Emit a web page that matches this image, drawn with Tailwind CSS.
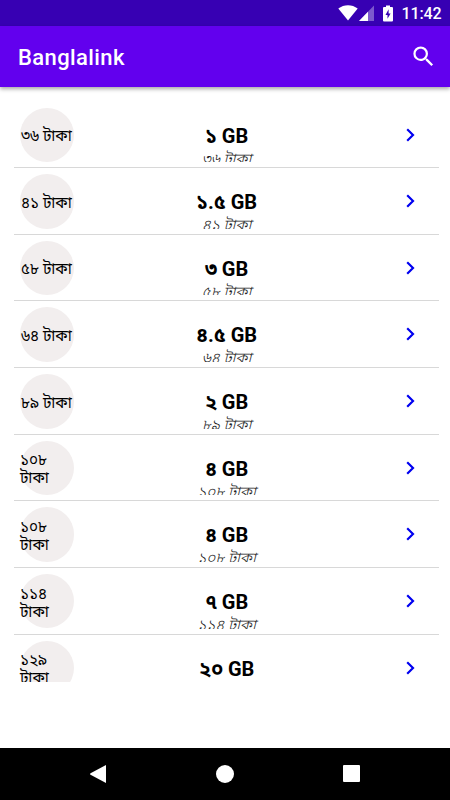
<!DOCTYPE html>
<html lang="bn">
<head>
    <meta charset="UTF-8">
    <meta name="viewport" content="width=device-width, initial-scale=1.0">
    <title>Banglalink</title>
    <script src="https://cdn.jsdelivr.net/npm/@tailwindcss/browser@4"></script>
</head>
<body class="bg-white">
    <div class="flex h-[800px] w-[450px] flex-col overflow-hidden font-[Roboto,'Noto_Sans_Bengali','Noto_Sans',sans-serif] text-black">
        <!-- Status bar -->
        <div class="flex h-[26px] shrink-0 items-center justify-end bg-[#3700b3] pr-[8.500px] text-white">
            <svg class="mr-px h-[16px] w-[20px]" viewBox="0 0 20 16" fill="currentColor"><path d="M.3 3.6C6-.9 14-.9 19.700 3.600L10 15.500Z"/></svg>
            <svg class="mr-[9px] h-[16px] w-[15px]" viewBox="0 0 15 16" fill="currentColor"><path d="M15 .5V16H0Z" opacity=".35"/><path d="M9 6.700V16H0Z"/></svg>
            <svg class="mr-[8px] h-[17px] w-[10px]" viewBox="0 0 10 17"><path fill="currentColor" d="M3 .5h4V2h2q1 0 1 1v12.500q0 1-1 1H1q-1 0-1-1V3q0-1 1-1h2Z"/><path fill="#3700b3" d="M5.600 4.300 2.500 10h2v3.800L7.600 8.500h-2Z"/></svg>
            <span class="pt-[2px] text-[16px] leading-[24px] font-medium tracking-[-0.1px]">11:42</span>
        </div>

        <!-- App bar -->
        <div class="z-10 flex h-[61px] shrink-0 items-center justify-between bg-[#6200ee] pr-[13px] pl-[18px] text-white shadow-[0_2px_4px_rgba(0,0,0,0.35)]">
            <h1 class="pt-[3px] text-[22px] leading-[28px] font-medium tracking-[0.4px]">Banglalink</h1>
            <svg class="h-[27px] w-[27px]" viewBox="0 0 24 24" fill="currentColor"><path d="M15.500 14h-.79l-.28-.27A6.470 6.470 0 0 0 16 9.500 6.500 6.500 0 1 0 9.500 16c1.610 0 3.090-.59 4.230-1.570l.27.28v.79l5 4.990L20.490 19l-4.990-5zm-6 0C7.010 14 5 11.990 5 9.500S7.010 5 9.500 5 14 7.010 14 9.500 11.990 14 9.500 14z"/></svg>
        </div>

        <!-- Offer list -->
        <div id="offers" class="mt-[14.500px] mr-[11px] ml-[14px] h-[580.500px] shrink-0 overflow-hidden"></div>

        <!-- Navigation bar -->
        <div class="mt-auto flex h-[52.500px] shrink-0 items-center justify-between bg-black pr-[90px] pl-[90px] text-white">
            <svg class="h-[18px] w-[16px]" viewBox="0 0 16 18" fill="currentColor"><path d="M16 0v18L.5 9.800q-.8-.8 0-1.600Z"/></svg>
            <div class="h-[18px] w-[18px] rounded-full bg-white"></div>
            <div class="h-[17px] w-[17px] rounded-[1px] bg-white"></div>
        </div>
    </div>

    <script>
        const offers = [
            { price: '৩৬', data: '১' },
            { price: '৪১', data: '১.৫' },
            { price: '৫৮', data: '৩' },
            { price: '৬৪', data: '৪.৫' },
            { price: '৮৯', data: '২' },
            { price: '১০৮', data: '৪' },
            { price: '১০৮', data: '৪' },
            { price: '১১৪', data: '৭' },
            { price: '১২৯', data: '২০' }
        ];

        const container = document.getElementById('offers');
        offers.forEach(offer => {
            const row = document.createElement('div');
            row.className = 'flex h-[66.670px] justify-between border-b border-[#d8d8d8] px-[6px] pt-[6px] pb-[5px]';
            row.innerHTML = `
                <div class="flex h-[54.400px] w-[54px] shrink-0 items-center rounded-full bg-[#f2eeee]">
                    <span class="${offer.price.length > 2 ? 'w-[50px] pl-0' : 'whitespace-nowrap pl-px'} pt-[2.500px] text-[15.300px] leading-[18px]">${offer.price} টাকা</span>
                </div>
                <div class="h-[54.500px] w-[120px] overflow-hidden text-center">
                    <div class="pt-[16px] text-[20px] leading-[24px] font-bold tracking-[-0.1px]">${offer.data} GB</div>
                    <div class="pt-[2px] text-[15.200px] leading-[18px] font-light text-[#222] italic">${offer.price} টাকা</div>
                </div>
                <div class="flex h-[54px] w-[54px] items-center justify-end pr-[18.500px]">
                    <svg class="h-[14px] w-[9px]" viewBox="0 0 9 14" fill="none" stroke="#0000f0" stroke-width="2.200"><path d="M1.200 1.200 7 7l-5.800 5.800"/></svg>
                </div>
            `;
            container.appendChild(row);
        });
    </script>
</body>
</html>
